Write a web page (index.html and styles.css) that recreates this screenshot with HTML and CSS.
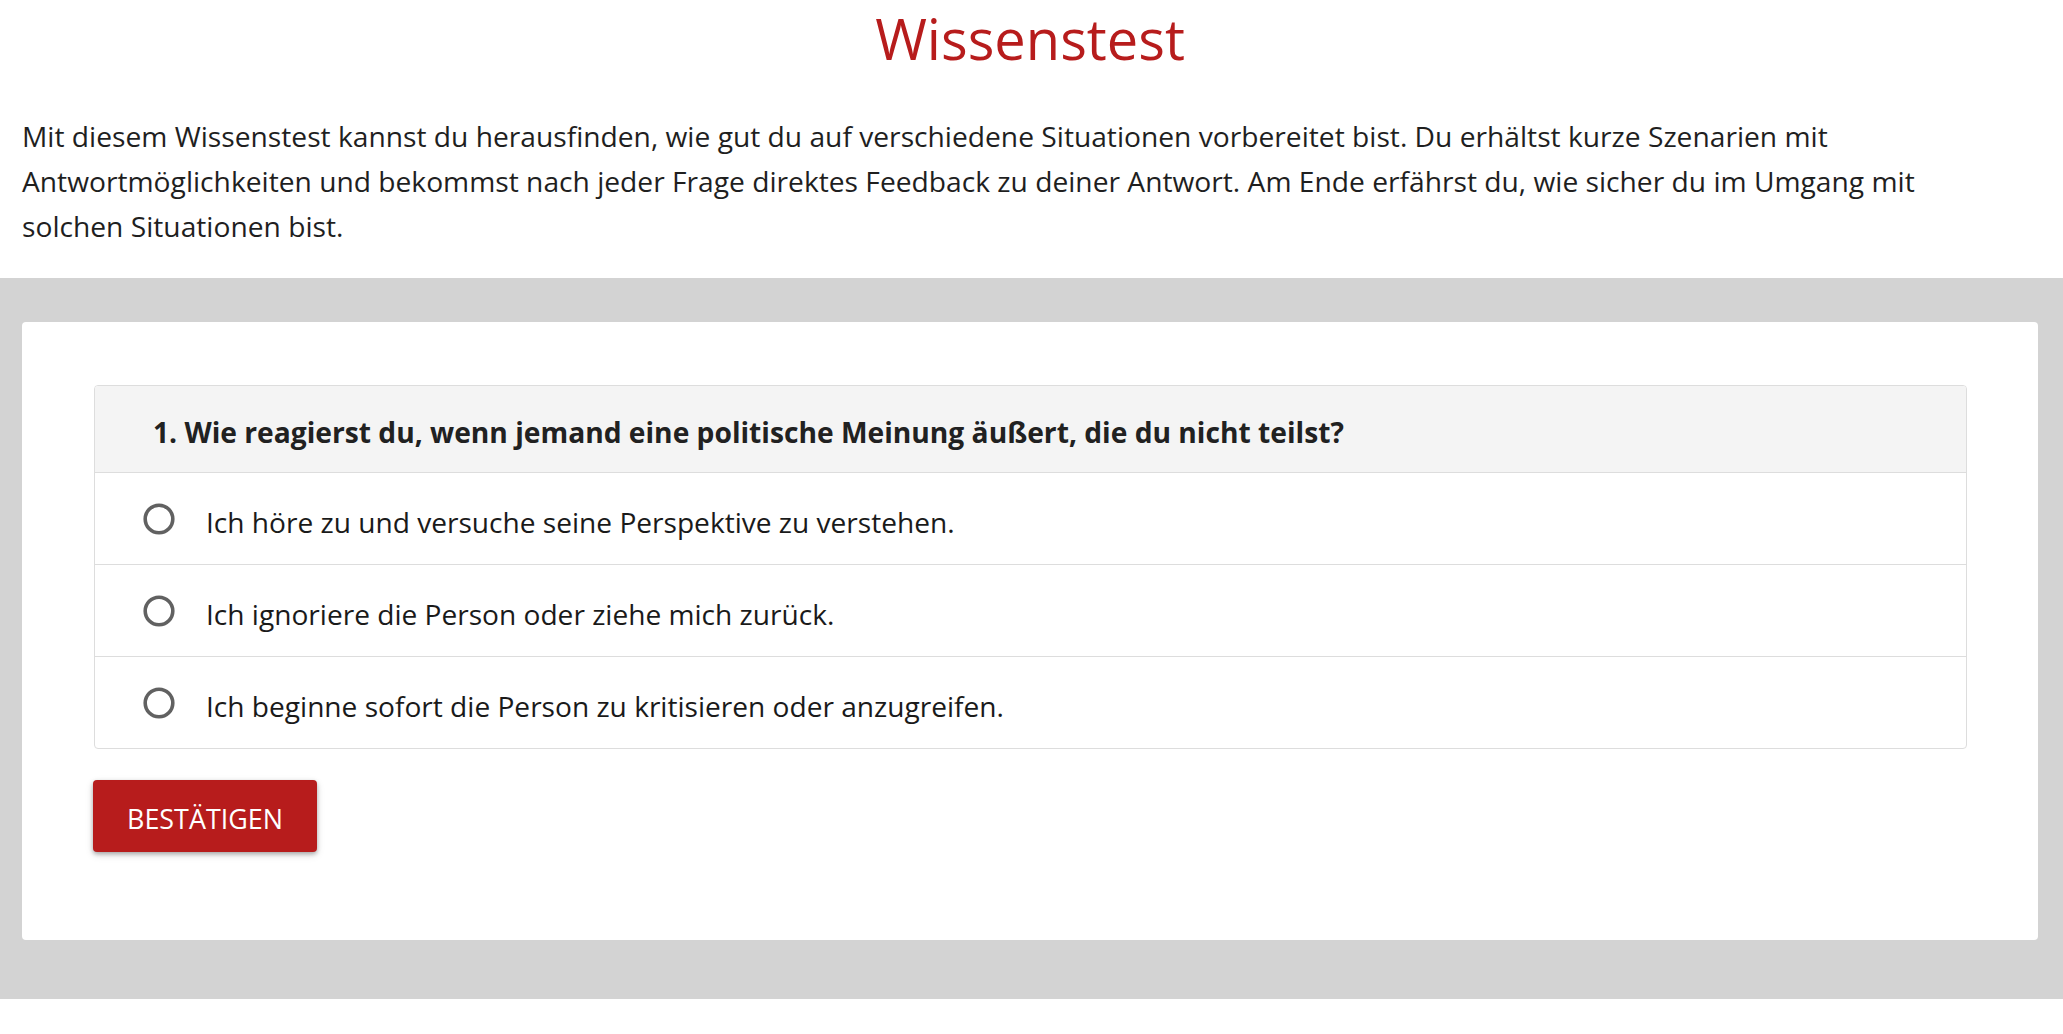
FILE: index.html
```html
<!DOCTYPE html>
<html lang="de">
<head>
<meta charset="utf-8">
<title>Wissenstest</title>
<link rel="stylesheet" href="styles.css">
</head>
<body>
<header class="intro">
  <h1 class="title">Wissenstest</h1>
  <p class="lead">Mit diesem Wissenstest kannst du herausfinden, wie gut du auf verschiedene Situationen vorbereitet bist. Du erhältst kurze Szenarien mit Antwortmöglichkeiten und bekommst nach jeder Frage direktes Feedback zu deiner Antwort. Am Ende erfährst du, wie sicher du im Umgang mit solchen Situationen bist.</p>
</header>
<main class="stage">
  <section class="card">
    <div class="question">
      <div class="question-head">1. Wie reagierst du, wenn jemand eine politische Meinung äußert, die du nicht teilst?</div>
      <label class="option">
        <svg class="radio" width="32" height="32" viewBox="0 0 32 32"><circle cx="16" cy="16" r="13.8" fill="none" stroke="#616161" stroke-width="3.6"/></svg>
        <span class="option-text">Ich höre zu und versuche seine Perspektive zu verstehen.</span>
      </label>
      <label class="option">
        <svg class="radio" width="32" height="32" viewBox="0 0 32 32"><circle cx="16" cy="16" r="13.8" fill="none" stroke="#616161" stroke-width="3.6"/></svg>
        <span class="option-text">Ich ignoriere die Person oder ziehe mich zurück.</span>
      </label>
      <label class="option">
        <svg class="radio" width="32" height="32" viewBox="0 0 32 32"><circle cx="16" cy="16" r="13.8" fill="none" stroke="#616161" stroke-width="3.6"/></svg>
        <span class="option-text">Ich beginne sofort die Person zu kritisieren oder anzugreifen.</span>
      </label>
    </div>
    <button class="confirm" type="button">BESTÄTIGEN</button>
  </section>
</main>
</body>
</html>
```
FILE: styles.css
```css
html, body {
  margin: 0;
  padding: 0;
  background: #ffffff;
}
body {
  font-family: "Open Sans", "Noto Sans", sans-serif;
  color: #212121;
}
.intro {
  padding: 0 25px 0 22px;
}
.title {
  margin: 0;
  font-size: 56px;
  line-height: 76px;
  font-weight: 400;
  color: #b71c1c;
  text-align: center;
}
.lead {
  margin: 38px 0 29px;
  max-width: 1940px;
  font-size: 28.2px;
  line-height: 45px;
  color: #1f1f1f;
}
.stage {
  background: #d3d3d3;
  padding: 44px 25px 59px 22px;
}
.card {
  background: #ffffff;
  border-radius: 4px;
  padding: 63px 71px 88px 72px;
}
.question {
  box-sizing: border-box;
  border: 1px solid #dddddd;
  border-radius: 4px;
  overflow: hidden;
}
.question-head {
  height: 86px;
  box-sizing: border-box;
  display: flex;
  align-items: center;
  padding: 5px 20px 0 58px;
  background: #f4f4f4;
  font-size: 28.2px;
  font-weight: 700;
  color: #212121;
}
.option {
  height: 92px;
  box-sizing: border-box;
  display: flex;
  align-items: center;
  gap: 31px;
  padding-left: 48px;
  border-top: 1px solid #dddddd;
  font-size: 28.1px;
  color: #1a1a1a;
  cursor: pointer;
}
.radio {
  flex: none;
  display: block;
}
.option-text {
  padding-top: 6px;
}
.confirm {
  display: block;
  margin: 31px 0 0 -1px;
  width: 224px;
  height: 72px;
  padding: 4px 0 0;
  border: 0;
  border-radius: 4px;
  background: #b71c1c;
  color: #ffffff;
  font-family: "Open Sans", "Noto Sans", sans-serif;
  font-size: 26.9px;
  box-shadow: 0 2px 4px rgba(0, 0, 0, 0.28), 0 3px 8px rgba(0, 0, 0, 0.12);
  cursor: pointer;
}
```
